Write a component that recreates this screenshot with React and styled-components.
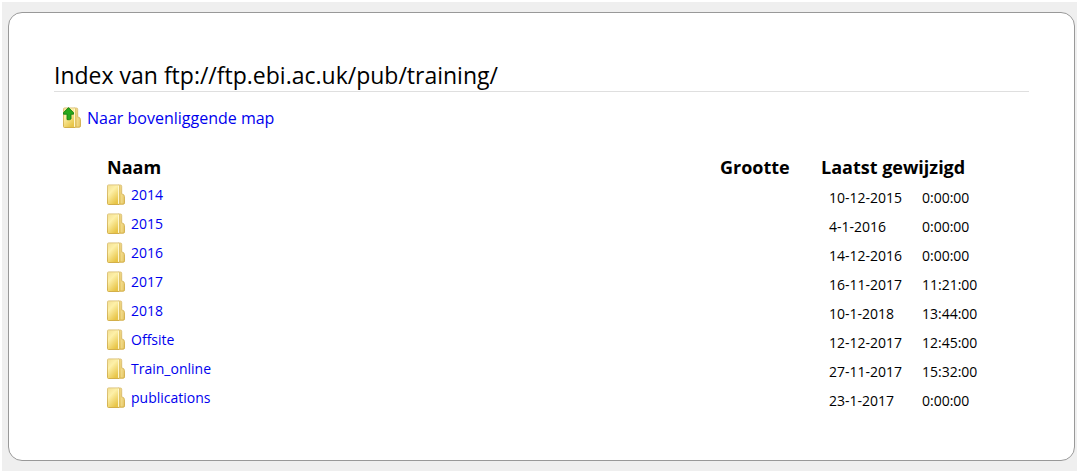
import styled, { createGlobalStyle } from "styled-components";

const GlobalStyle = createGlobalStyle`
  * {
    box-sizing: border-box;
  }

  body {
    margin: 0;
    padding: 2px;
    background-color: white;
    color: black;
    font-family: "Open Sans", "Noto Sans", sans-serif;
  }
`;

const Page = styled.div`
  padding: 10px 2px 10px 6px;
  background-color: #efefef;
`;

const Card = styled.main`
  padding: 46px 45px 48px;
  border: 1px solid #999;
  border-radius: 14px;
  background-color: white;
`;

const Title = styled.h1`
  margin: 0 0 12px;
  border-bottom: 1px solid #dfdfdf;
  font-size: 23px;
  font-weight: 400;
  line-height: 32px;
`;

const Link = styled.a`
  display: flex;
  align-items: center;
  gap: 5px;
  width: fit-content;
  color: #0000ee;
  text-decoration: none;
  font-size: 14px;
  line-height: 28px;
`;

const ParentLink = styled(Link)`
  margin-left: 9px;
  font-size: 16px;
`;

const Listing = styled.table`
  width: calc(100% - 98px);
  margin: 22px 45px 0 53px;
  border-collapse: collapse;
  table-layout: fixed;
`;

const Column = styled.col`
  width: ${(props) => props.$width};
`;

const Heading = styled.th`
  padding: 0;
  font-size: 18px;
  font-weight: 700;
  line-height: 26px;
  text-align: left;
  white-space: nowrap;
`;

const Cell = styled.td`
  height: 29px;
  padding: 0;
  vertical-align: middle;
`;

const DateCell = styled(Cell)`
  padding: 6px 0 0 ${(props) => (props.$indent ? "8px" : "0")};
  font-size: 14px;
  line-height: 20px;
  white-space: nowrap;
`;

const Icon = styled.svg`
  flex: none;
  width: 19px;
  height: 22px;
`;

const entries = [
  { name: "2014", date: "10-12-2015", time: "0:00:00" },
  { name: "2015", date: "4-1-2016", time: "0:00:00" },
  { name: "2016", date: "14-12-2016", time: "0:00:00" },
  { name: "2017", date: "16-11-2017", time: "11:21:00" },
  { name: "2018", date: "10-1-2018", time: "13:44:00" },
  { name: "Offsite", date: "12-12-2017", time: "12:45:00" },
  { name: "Train_online", date: "27-11-2017", time: "15:32:00" },
  { name: "publications", date: "23-1-2017", time: "0:00:00" },
];

const FolderIcon = ({ up }) => (
  <Icon viewBox="0 0 19 22" aria-hidden="true">
    <defs>
      <linearGradient id="folderFront" x1="0" y1="0" x2="0.6" y2="1">
        <stop offset="0" stopColor="#f3df92" />
        <stop offset="0.4" stopColor="#fdf0a8" />
        <stop offset="1" stopColor="#e8c548" />
      </linearGradient>
      <linearGradient id="folderBack" x1="0" y1="0" x2="0" y2="1">
        <stop offset="0" stopColor="#efd685" />
        <stop offset="1" stopColor="#e6c766" />
      </linearGradient>
      <linearGradient id="folderEdge" x1="0" y1="0" x2="0" y2="1">
        <stop offset="0" stopColor="#dcc27a" />
        <stop offset="1" stopColor="#cfa93f" />
      </linearGradient>
    </defs>
    <path
      d="M11 1h2.5q1.2 0 1.2 1.2v7.6q2.8.6 2.8 2.8v6.3q0 1.3-1.3 1.3H11z"
      fill="url(#folderBack)"
      stroke="url(#folderEdge)"
      strokeWidth="0.9"
    />
    <path d="M14.9 10.5v9" stroke="#f9e9a4" strokeWidth="0.7" />
    <path
      d="M1.5.9h10.2v19.6H1.5q-1 0-1-1V1.9q0-1 1-1z"
      fill="url(#folderFront)"
      stroke="url(#folderEdge)"
      strokeWidth="0.9"
    />
    <path d="M11.5 1.5v18.4" stroke="#fff8cf" strokeWidth="1" />
    <path d="M12.5 1.5v18.6" stroke="#dcbf63" strokeWidth="0.6" />
    {up && (
      <path
        d="M5.5 0.6l5 5v1.6H8v4.8q-1.5 1.2-4 .6V7.2H.5V5.6z"
        fill="#27a81b"
        stroke="#168012"
        strokeWidth="0.9"
        strokeLinejoin="round"
      />
    )}
  </Icon>
);

const App = () => {
  return (
    <>
      <GlobalStyle />
      <Page>
        <Card>
          <Title>Index van ftp://ftp.ebi.ac.uk/pub/training/</Title>
          <ParentLink href="#">
            <FolderIcon up />
            Naar bovenliggende map
          </ParentLink>
          <Listing>
            <colgroup>
              <Column />
              <Column $width="101px" />
              <Column $width="101px" />
              <Column $width="62px" />
            </colgroup>
            <thead>
              <tr>
                <Heading scope="col">Naam</Heading>
                <Heading scope="col">Grootte</Heading>
                <Heading scope="col" colSpan={2}>
                  Laatst gewijzigd
                </Heading>
              </tr>
            </thead>
            <tbody>
              {entries.map((entry) => (
                <tr key={entry.name}>
                  <Cell>
                    <Link href={`#${entry.name}`}>
                      <FolderIcon />
                      {entry.name}
                    </Link>
                  </Cell>
                  <Cell />
                  <DateCell $indent>{entry.date}</DateCell>
                  <DateCell>{entry.time}</DateCell>
                </tr>
              ))}
            </tbody>
          </Listing>
        </Card>
      </Page>
    </>
  );
};

export default App;
